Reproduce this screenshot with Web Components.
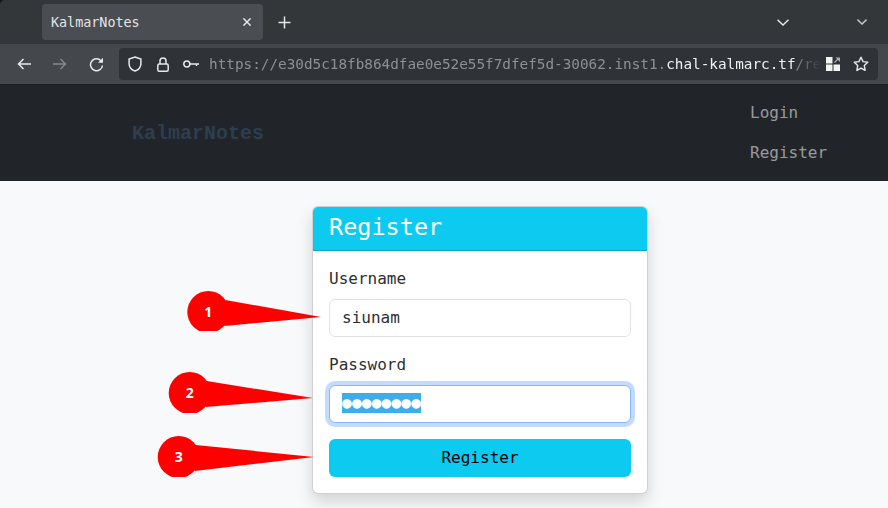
<!DOCTYPE html>
<html lang="en">
<head>
<meta charset="utf-8">
<title>KalmarNotes</title>
<style>
  html, body { margin: 0; height: 100%; overflow: hidden; background: #f8f9fa; }
  body { font-family: "DejaVu Sans Mono", "Liberation Mono", monospace; font-size: 16px; color: #212529; position: relative; }
</style>
</head>
<body>
<browser-chrome></browser-chrome>
<site-nav>
  <span slot="brand">KalmarNotes</span>
  <a slot="links">Login</a>
  <a slot="links">Register</a>
</site-nav>
<register-card>
  <form-field label="Username" value="siunam"></form-field>
  <form-field label="Password" value="●●●●●●●●" focused></form-field>
  <submit-button>Register</submit-button>
</register-card>
<callout-pin n="1" cx="208.300" cy="312" tipx="321" tipy="317" bottom="331"></callout-pin>
<callout-pin n="2" cx="189.700" cy="393" tipx="313" tipy="398" bottom="413"></callout-pin>
<callout-pin n="3" cx="178.700" cy="457" tipx="314" tipy="457" bottom="477"></callout-pin>

<script>
class BrowserChrome extends HTMLElement {
  constructor() {
    super();
    this.attachShadow({ mode: 'open' });
    this.shadowRoot.innerHTML = `<style>
  :host { display: block; background: #17191b; font-family: "DejaVu Sans Mono", monospace; }
  svg { display: block; flex: none; fill: none; stroke: currentColor; stroke-width: 1.5; }
  .tabs { height: 44px; background: #33373a; border-top-left-radius: 5px; display: flex; align-items: center; color: #e4e5e6; }
  .tab { margin-left: 42px; width: 221px; height: 36px; box-sizing: border-box; padding: 0 12px 0 9px; background: #4a4d52; border-radius: 4px;
    display: flex; align-items: center; justify-content: space-between; font-size: 13.4px; }
  .new { margin-left: 15px; }
  .chev1 { margin-left: 486px; }
  .chev2 { margin-left: 68px; color: #c4c6c8; }
  .bar { height: 40px; background: #44484d; border-bottom: 1px solid #1b1e21; display: flex; align-items: center; color: #e8e9ea; }
  .back { margin-left: 17px; }
  .fwd { margin-left: 22px; color: #85888c; }
  .reload { margin-left: 22px; }
  .url { margin-left: 15px; width: 759px; height: 32px; box-sizing: border-box; background: #2f3236; border-radius: 4px; display: flex; align-items: center; padding-left: 9px; }
  .lock { margin-left: 15px; }
  .key { margin-left: 14px; }
  .text { margin-left: 10px; width: 613px; font-size: 14.33px; color: #8e9094; white-space: nowrap;
    -webkit-mask-image: linear-gradient(to right, #000 95.6%, transparent 100%); mask-image: linear-gradient(to right, #000 95.6%, transparent 100%); }
  .text b { font-weight: 400; color: #f0f1f2; }
  .grid { margin-left: 4px; }
  .star { margin-left: 13px; }
</style>
<div class="tabs">
  <div class="tab"><span>KalmarNotes</span>
    <svg width="8" height="8" viewBox="0 0 8 8" stroke-width="1.1"><path d="M.4.4l7.2 7.2M7.600.4L.4 7.600"/></svg>
  </div>
  <svg class="new" width="13" height="13" viewBox="0 0 13 13"><path d="M6.500 .5v12M.5 6.500h12"/></svg>
  <svg class="chev1" width="12" height="7" viewBox="0 0 12 7"><path d="M.5.7L6 6 11.500.7"/></svg>
  <svg class="chev2" width="10" height="6" viewBox="0 0 10 6"><path d="M.4.6L5 5 9.600.6"/></svg>
</div>
<div class="bar">
  <svg class="back" width="14" height="12" viewBox="0 0 14 12"><path d="M14 6H1.500M6.500 1L1.500 6l5 5"/></svg>
  <svg class="fwd" width="14" height="12" viewBox="0 0 14 12"><path d="M0 6h12.500M7.500 1l5 5-5 5"/></svg>
  <svg class="reload" width="15" height="15" viewBox="0 0 15 15"><path d="M13.500 8.500A6 6 0 1 1 10.500 2.500L12.500 4.500"/><path d="M14 .8v5H9z" fill="currentColor" stroke="none"/></svg>
  <div class="url">
    <svg width="14" height="16" viewBox="0 0 14 16"><path d="M7 1l5.900 2v4.700c0 3.700-2.600 6.100-5.900 7.300C3.700 13.800 1.100 11.400 1.100 7.700V3z"/></svg>
    <svg class="lock" width="12" height="15" viewBox="0 0 12 15"><path d="M3 7V4a3 3 0 0 1 6 0V7"/><rect x=".8" y="7" width="10.400" height="7.200" rx="1.500"/></svg>
    <svg class="key" width="16" height="8" viewBox="0 0 16 8" stroke-width="1.200"><circle cx="3.800" cy="4" r="3"/><path d="M6.800 4H16M13.500 4v2"/></svg>
    <div class="text">https://e30d5c18fb864dfae0e52e55f7dfef5d-30062.inst1.<b>chal-kalmarc.tf</b>/re</div>
    <svg class="grid" width="14" height="14" viewBox="0 0 14 14"><g fill="#f4f4f4" stroke="none"><rect width="6.500" height="6.500"/><rect y="7.500" width="6.500" height="6.500"/><rect x="7.500" y="7.500" width="6.500" height="6.500"/></g><path d="M8.500 5.500L12.500 1.500" stroke="#a9abae" stroke-width="1.200"/><path d="M9.500 .5H14V5z" fill="#a9abae" stroke="none"/></svg>
    <svg class="star" width="16" height="16" viewBox="0 0 17 17" stroke-width="1.300"><path d="M8.500 1.300l2.200 4.700 5 .7-3.700 3.500.9 5.100-4.400-2.500-4.400 2.500.9-5.100L1.300 6.700l5-.7z" stroke-linejoin="round"/></svg>
  </div>
</div>`;
  }
}
customElements.define('browser-chrome', BrowserChrome);

class SiteNav extends HTMLElement {
  constructor() {
    super();
    this.attachShadow({ mode: 'open' });
    this.shadowRoot.innerHTML = `<style>
  :host { display: flex; align-items: center; justify-content: space-between; box-sizing: border-box; height: 96px; background: #212529; padding: 0 59px 0 132px; }
  .brand { font: bold 20px "Liberation Mono", monospace; color: #2c3e50; }
  nav { display: flex; flex-direction: column; width: 79px; color: rgba(255, 255, 255, .55); font-family: "DejaVu Sans Mono", monospace; font-size: 16px; line-height: 24px; }
  ::slotted(a) { display: block; padding: 8px 0; }
</style>
<div class="brand"><slot name="brand"></slot></div>
<nav><slot name="links"></slot></nav>`;
  }
}
customElements.define('site-nav', SiteNav);

class RegisterCard extends HTMLElement {
  constructor() {
    super();
    this.attachShadow({ mode: 'open' });
    this.shadowRoot.innerHTML = `<style>
  :host { display: block; box-sizing: border-box; width: 336px; margin: 25px 0 0 312px; background: #fff; border: 1px solid rgba(0, 0, 0, .175); border-radius: 6px;
    box-shadow: 0 8px 16px rgba(0, 0, 0, .15); }
  header { height: 44px; box-sizing: border-box; background: #0dcaf0; color: #fff; border-bottom: 1px solid rgba(0, 0, 0, .175); border-radius: 5px 5px 0 0;
    padding: 0 16px; font-size: 23.500px; line-height: 41px; }
  .body { padding: 16px; display: flex; flex-direction: column; gap: 16px; }
</style>
<header>Register</header>
<div class="body"><slot></slot></div>`;
  }
}
customElements.define('register-card', RegisterCard);

class FormField extends HTMLElement {
  constructor() {
    super();
    this.attachShadow({ mode: 'open' });
    const focused = this.hasAttribute('focused');
    this.shadowRoot.innerHTML = `<style>
  :host { display: block; }
  label { display: block; line-height: 24px; margin-bottom: 8px; color: #2b2f33; }
  .input { height: 38px; box-sizing: border-box; padding: 0 12px; line-height: 36px; background: #fff; border: 1px solid #dee2e6; border-radius: 6px; color: #2b2f33; }
  .focused { border-color: #86b7fe; box-shadow: 0 0 0 4px rgba(13, 110, 253, .25); }
  .focused span { display: inline-block; height: 20px; line-height: 20px; background: #3daee9; color: #fff; letter-spacing: .26px; vertical-align: 1px; }
</style>
<label>${this.getAttribute('label')}</label>
<div class="input ${focused ? 'focused' : ''}"><span>${this.getAttribute('value')}</span></div>`;
  }
}
customElements.define('form-field', FormField);

class SubmitButton extends HTMLElement {
  constructor() {
    super();
    this.attachShadow({ mode: 'open' });
    this.shadowRoot.innerHTML = `<style>
  :host { display: block; height: 38px; line-height: 38px; text-align: center; background: #0dcaf0; border-radius: 6px; color: #000; }
</style><slot></slot>`;
  }
}
customElements.define('submit-button', SubmitButton);

// red arrows drawn over the screenshot, cut flat at the bottom
class CalloutPin extends HTMLElement {
  constructor() {
    super();
    this.attachShadow({ mode: 'open' });
    const a = (k) => Number(this.getAttribute(k));
    const cx = a('cx'), cy = a('cy'), tx = a('tipx'), ty = a('tipy'), bottom = a('bottom');
    const left = Math.floor(cx - 22), top = cy - 22;
    const w = tx - left + 1, h = bottom - top;
    const x = cx - left, y = cy - top;
    this.shadowRoot.innerHTML = `<style>
  :host { position: absolute; left: ${left}px; top: ${top}px; width: ${w}px; height: ${h}px; overflow: hidden; }
  svg { display: block; }
  text { font: bold 14px "Open Sans", sans-serif; fill: #fff; text-anchor: middle; }
</style>
<svg width="${w}" height="${h}" viewBox="0 0 ${w} ${h}">
  <circle cx="${x}" cy="${y}" r="21" fill="#f00"/>
  <polygon points="${x + 17},${y - 12} ${tx - left},${ty - top} ${x + 16},${y + 14}" fill="#f00"/>
  <text x="${x}" y="${y + 5}">${this.getAttribute('n')}</text>
</svg>`;
  }
}
customElements.define('callout-pin', CalloutPin);
</script>
</body>
</html>
